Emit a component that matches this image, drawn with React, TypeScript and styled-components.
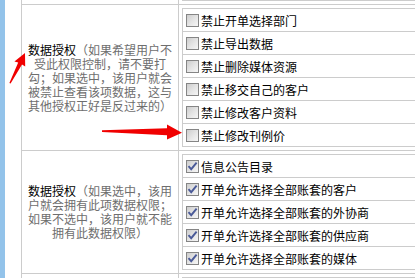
import styled, { createGlobalStyle } from 'styled-components'

const GlobalStyle = createGlobalStyle`
  html, body {
    margin: 0;
    padding: 0;
    background: #fff;
    overflow: hidden;
  }
  body {
    font-family: "Noto Sans CJK SC", "Noto Sans", sans-serif;
    font-size: 12px;
    text-spacing-trim: space-all;
  }
`

const LINE = '#cccccc'

const Page = styled.div`
  position: relative;
  display: flex;
  width: 100vw;
  height: 278px;
  overflow: hidden;
`

const SideStrip = styled.div`
  width: 5px;
  flex: none;
  background: #93c3ea;
`

const Gutter = styled.div`
  width: 16px;
  flex: none;
`

const Table = styled.div`
  flex: 1;
  display: flex;
  flex-direction: column;
  border-left: 1px solid ${LINE};
`

const Row = styled.div`
  display: grid;
  grid-template-columns: 157px minmax(0, 1fr);
  border-top: 1px solid ${LINE};

  &:first-child {
    border-top: none;
  }
`

const LabelCell = styled.div`
  display: flex;
  align-items: center;
  justify-content: center;
  padding: 0 4px;
  border-right: 1px solid ${LINE};
  text-align: center;
  font-size: 12px;
  line-height: 14px;
  color: #6e6e6e;
`

const Title = styled.span`
  color: #000;
`

const OptionCell = styled.div<{ $tail?: boolean }>`
  padding: ${p => (p.$tail ? '0 0 3px 3px' : '3px 0 3px 3px')};
`

// the inner tables run on past the right edge of the frame, so their right border is cut off
const OptionList = styled.div<{ $tail?: boolean; $open?: boolean }>`
  border: 1px solid ${LINE};
  border-right: none;
  border-top: ${p => (p.$tail ? 'none' : `1px solid ${LINE}`)};
  border-bottom: ${p => (p.$open ? 'none' : `1px solid ${LINE}`)};
  min-height: ${p => (p.$open ? '24px' : '0')};
`

const OptionRow = styled.div`
  display: flex;
  align-items: center;
  gap: 2px;
  height: 22px;
  padding-left: 3px;
  font-size: 12px;
  line-height: 14px;
  color: #000;
  white-space: nowrap;

  & + & {
    border-top: 1px solid ${LINE};
  }
`

const Box = styled.span`
  display: grid;
  place-items: center;
  flex: none;
  width: 13px;
  height: 13px;
  box-sizing: border-box;
  border: 1px solid #858585;
  background: linear-gradient(135deg, #cdcdcd 0%, #e6e6e6 55%, #f6f6f6 100%);
`

const OptionText = styled.span`
  padding-top: 2px;
`

const Arrows = styled.svg`
  position: absolute;
  left: 0;
  top: 0;
  pointer-events: none;
`

type Option = { label: string; checked?: boolean }

const denyOptions: Option[] = [
  { label: '禁止开单选择部门' },
  { label: '禁止导出数据' },
  { label: '禁止删除媒体资源' },
  { label: '禁止移交自己的客户' },
  { label: '禁止修改客户资料' },
  { label: '禁止修改刊例价' },
]

const grantOptions: Option[] = [
  { label: '信息公告目录', checked: true },
  { label: '开单允许选择全部账套的客户', checked: true },
  { label: '开单允许选择全部账套的外协商', checked: true },
  { label: '开单允许选择全部账套的供应商', checked: true },
  { label: '开单允许选择全部账套的媒体', checked: true },
]

function CheckBox({ checked }: { checked?: boolean }) {
  return (
    <Box>
      {checked && (
        <svg width="11" height="11" viewBox="0 0 11 11">
          <path d="M1.5 5.2 L4.2 8.2 L9.6 1.6" fill="none" stroke="#4a5a98" strokeWidth="1.9" />
        </svg>
      )}
    </Box>
  )
}

function Options({ items }: { items: Option[] }) {
  return (
    <OptionList>
      {items.map(o => (
        <OptionRow key={o.label}>
          <CheckBox checked={o.checked} />
          <OptionText>{o.label}</OptionText>
        </OptionRow>
      ))}
    </OptionList>
  )
}

export default function App() {
  return (
    <>
      <GlobalStyle />
      <Page>
        <SideStrip />
        <Gutter />
        <Table>
          <Row>
            <LabelCell />
            <OptionCell $tail>
              <OptionList $tail />
            </OptionCell>
          </Row>
          <Row>
            <LabelCell>
              <div>
                <Title>数据授权</Title>（如果希望用户不受此权限控制，请不要打勾；如果选中，该用户就会被禁止查看该项数据，这与其他授权正好是反过来的）
              </div>
            </LabelCell>
            <OptionCell>
              <Options items={denyOptions} />
            </OptionCell>
          </Row>
          <Row>
            <LabelCell>
              <div>
                <Title>数据授权</Title>（如果选中，该用户就会拥有此项数据权限；如果不选中，该用户就不能拥有此数据权限）
              </div>
            </LabelCell>
            <OptionCell>
              <Options items={grantOptions} />
            </OptionCell>
          </Row>
          <Row>
            <LabelCell />
            <OptionCell>
              <OptionList $open />
            </OptionCell>
          </Row>
        </Table>
        <Arrows width="415" height="278" viewBox="0 0 415 278">
          <polygon
            fill="#f00000"
            points="9.4,83 10.6,83.4 22,64.6 25.2,66.6 25,53 14.4,61.4 18.2,62.6"
          />
          <polygon
            fill="#f00000"
            points="102,130.2 102,132 167,135.2 167,139.5 182,132.8 167,124.5 167,128.3"
          />
        </Arrows>
      </Page>
    </>
  )
}
